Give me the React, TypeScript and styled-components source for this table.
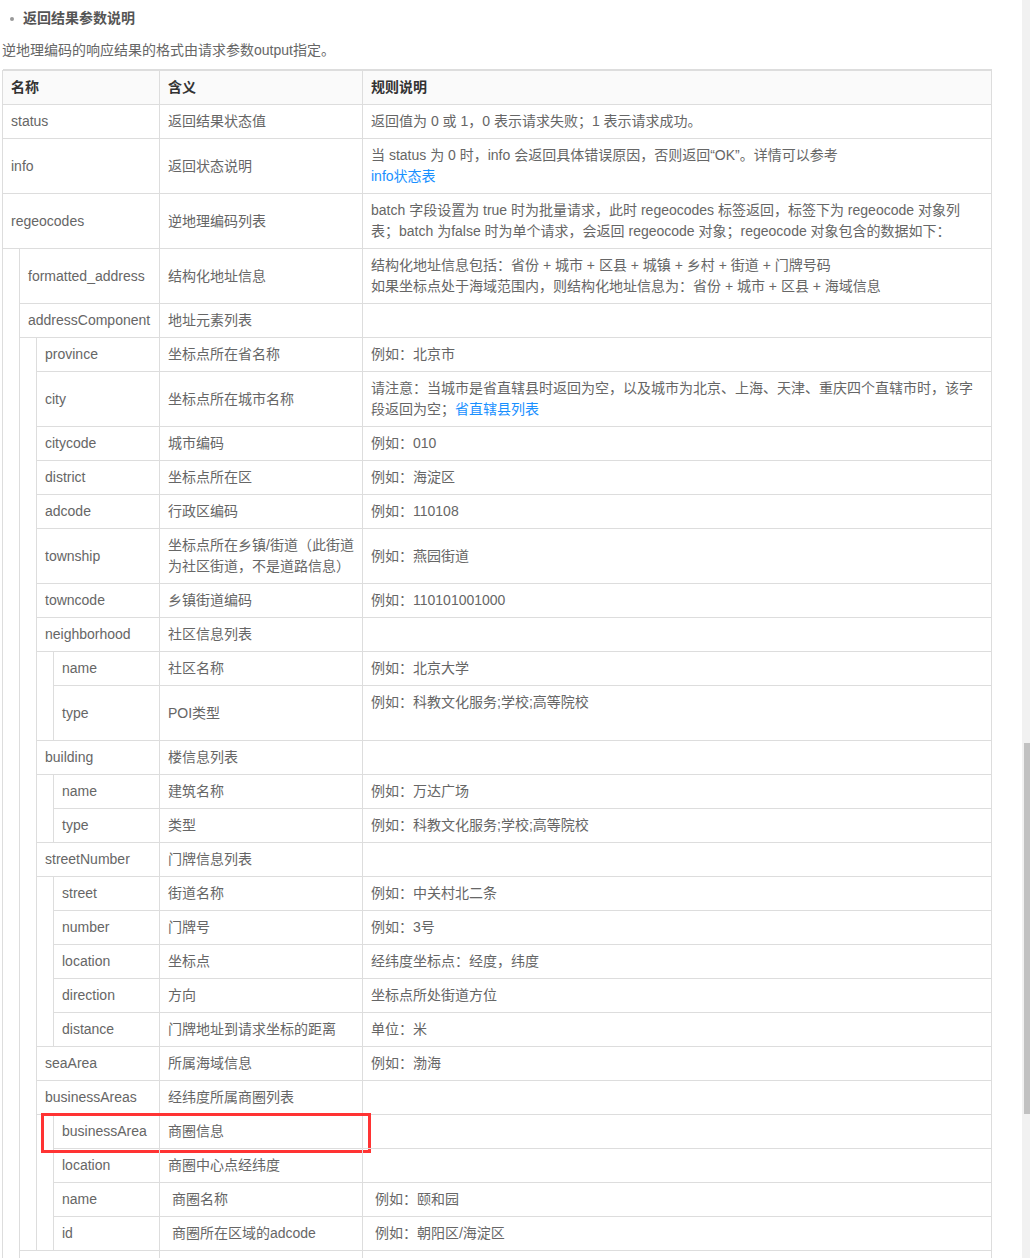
import React from 'react';
import styled, { createGlobalStyle } from 'styled-components';

const GlobalStyle = createGlobalStyle`
  html, body {
    margin: 0;
    padding: 0;
    background: #fff;
    overflow: hidden;
  }
  body {
    font-family: "Liberation Sans", "Noto Sans CJK SC", sans-serif;
    font-size: 14px;
    color: #666;
  }
`;

const Page = styled.div`
  padding: 8px 0 0 2px;
`;

const Title = styled.h4`
  display: flex;
  align-items: center;
  margin: 0 0 11px;
  height: 21px;
  font-size: 14px;
  line-height: 21px;
  font-weight: bold;
  color: #555;
`;

const Bullet = styled.span`
  width: 4px;
  height: 4px;
  margin: 1px 9px 0 8px;
  border-radius: 50%;
  background: #999;
`;

const Intro = styled.p`
  margin: 0 0 9px;
  line-height: 21px;
`;

const Table = styled.div`
  width: 990px;
  box-sizing: border-box;
  border-left: 1px solid #ddd;
`;

const Nest = styled.div`
  margin-left: 16px;
  border-left: 1px solid #ddd;
`;

const Row = styled.div<{ $head?: boolean; $marked?: boolean }>`
  position: relative;
  display: grid;
  grid-template-columns: 1fr 203px 629px;
  min-height: 33px;
  border-top: ${p => (p.$head ? '1px solid #ddd' : 'none')};
  border-bottom: 1px solid #ddd;
  box-shadow: 0 -1px 0 #ddd;
  background: ${p => (p.$head ? '#fafafa' : 'transparent')};
  color: ${p => (p.$head ? '#333' : '#666')};
  font-weight: ${p => (p.$head ? 'bold' : 'normal')};

  &::after {
    content: '';
    display: ${p => (p.$marked ? 'block' : 'none')};
    position: absolute;
    left: -13px;
    top: -2px;
    width: 330px;
    height: 40px;
    box-sizing: border-box;
    border: 3px solid #f33;
    pointer-events: none;
  }
`;

const Cell = styled.div`
  display: flex;
  align-items: center;
  min-width: 0;
  padding: 6px 8px;
  border-right: 1px solid #ddd;
  line-height: 21px;
  white-space: nowrap;
`;

const Link = styled.a`
  color: #1890ff;
  text-decoration: none;
`;

const ScrollTrack = styled.div`
  position: fixed;
  top: 0;
  right: 0;
  width: 8px;
  height: 100vh;
  background: #f1f1f1;
`;

const ScrollThumb = styled.div`
  position: absolute;
  top: 743px;
  left: 2px;
  right: 0;
  height: 371px;
  background: #c1c1c1;
`;

type Item = {
  name: string;
  meaning?: React.ReactNode;
  rule?: React.ReactNode;
  marked?: boolean;
  children?: Item[];
};

const example = (text: string) => `例如：${text}`;

const fields: Item[] = [
  { name: 'status', meaning: '返回结果状态值', rule: '返回值为 0 或 1，0 表示请求失败；1 表示请求成功。' },
  {
    name: 'info',
    meaning: '返回状态说明',
    rule: (
      <>
        当 status 为 0 时，info 会返回具体错误原因，否则返回“OK”。详情可以参考
        <br />
        <Link href="#">info状态表</Link>
      </>
    ),
  },
  {
    name: 'regeocodes',
    meaning: '逆地理编码列表',
    rule: (
      <>
        batch 字段设置为 true 时为批量请求，此时 regeocodes 标签返回，标签下为 regeocode 对象列
        <br />
        表；batch 为false 时为单个请求，会返回 regeocode 对象；regeocode 对象包含的数据如下：
      </>
    ),
    children: [
      {
        name: 'formatted_address',
        meaning: '结构化地址信息',
        rule: (
          <>
            结构化地址信息包括：省份 + 城市 + 区县 + 城镇 + 乡村 + 街道 + 门牌号码
            <br />
            如果坐标点处于海域范围内，则结构化地址信息为：省份 + 城市 + 区县 + 海域信息
          </>
        ),
      },
      {
        name: 'addressComponent',
        meaning: '地址元素列表',
        children: [
          { name: 'province', meaning: '坐标点所在省名称', rule: example('北京市') },
          {
            name: 'city',
            meaning: '坐标点所在城市名称',
            rule: (
              <>
                请注意：当城市是省直辖县时返回为空，以及城市为北京、上海、天津、重庆四个直辖市时，该字
                <br />
                段返回为空；<Link href="#">省直辖县列表</Link>
              </>
            ),
          },
          { name: 'citycode', meaning: '城市编码', rule: example('010') },
          { name: 'district', meaning: '坐标点所在区', rule: example('海淀区') },
          { name: 'adcode', meaning: '行政区编码', rule: example('110108') },
          {
            name: 'township',
            meaning: (
              <>
                坐标点所在乡镇/街道（此街道
                <br />
                为社区街道，不是道路信息）
              </>
            ),
            rule: example('燕园街道'),
          },
          { name: 'towncode', meaning: '乡镇街道编码', rule: example('110101001000') },
          {
            name: 'neighborhood',
            meaning: '社区信息列表',
            children: [
              { name: 'name', meaning: '社区名称', rule: example('北京大学') },
              {
                name: 'type',
                meaning: 'POI类型',
                rule: (
                  <>
                    {example('科教文化服务;学校;高等院校')}
                    <br />
                    {'\u00a0'}
                  </>
                ),
              },
            ],
          },
          {
            name: 'building',
            meaning: '楼信息列表',
            children: [
              { name: 'name', meaning: '建筑名称', rule: example('万达广场') },
              { name: 'type', meaning: '类型', rule: example('科教文化服务;学校;高等院校') },
            ],
          },
          {
            name: 'streetNumber',
            meaning: '门牌信息列表',
            children: [
              { name: 'street', meaning: '街道名称', rule: example('中关村北二条') },
              { name: 'number', meaning: '门牌号', rule: example('3号') },
              { name: 'location', meaning: '坐标点', rule: '经纬度坐标点：经度，纬度' },
              { name: 'direction', meaning: '方向', rule: '坐标点所处街道方位' },
              { name: 'distance', meaning: '门牌地址到请求坐标的距离', rule: '单位：米' },
            ],
          },
          { name: 'seaArea', meaning: '所属海域信息', rule: example('渤海') },
          {
            name: 'businessAreas',
            meaning: '经纬度所属商圈列表',
            children: [
              { name: 'businessArea', meaning: '商圈信息', marked: true },
              { name: 'location', meaning: '商圈中心点经纬度' },
              { name: 'name', meaning: '\u00a0商圈名称', rule: '\u00a0' + example('颐和园') },
              { name: 'id', meaning: '\u00a0商圈所在区域的adcode', rule: '\u00a0' + example('朝阳区/海淀区') },
            ],
          },
        ],
      },
      // next level-1 row starts at the bottom edge; its text lies below the visible area
      { name: '' },
    ],
  },
];

const renderRows = (items: Item[]): React.ReactNode =>
  items.map((item, i) => (
    <React.Fragment key={`${item.name}-${i}`}>
      <Row $marked={item.marked}>
        <Cell><div>{item.name}</div></Cell>
        <Cell><div>{item.meaning}</div></Cell>
        <Cell><div>{item.rule}</div></Cell>
      </Row>
      {item.children && <Nest>{renderRows(item.children)}</Nest>}
    </React.Fragment>
  ));

export default function App() {
  return (
    <>
      <GlobalStyle />
      <Page>
        <Title>
          <Bullet />
          返回结果参数说明
        </Title>
        <Intro>逆地理编码的响应结果的格式由请求参数output指定。</Intro>
        <Table>
          <Row $head>
            <Cell>名称</Cell>
            <Cell>含义</Cell>
            <Cell>规则说明</Cell>
          </Row>
          {renderRows(fields)}
        </Table>
      </Page>
      <ScrollTrack>
        <ScrollThumb />
      </ScrollTrack>
    </>
  );
}
